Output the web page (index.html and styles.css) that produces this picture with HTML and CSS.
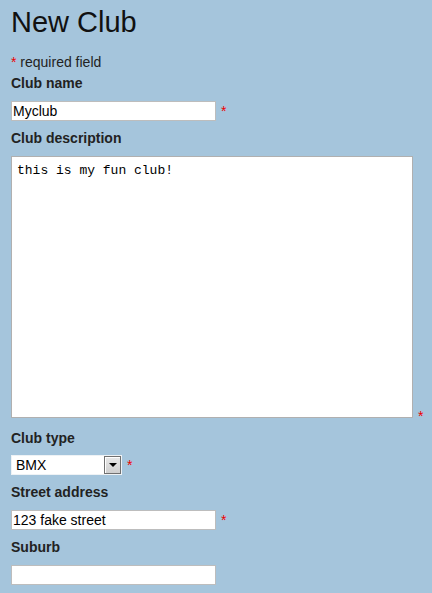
FILE: index.html
```html
<!DOCTYPE html>
<html>
<head>
<meta charset="utf-8">
<title>New Club</title>
<link rel="stylesheet" href="styles.css">
</head>
<body>
<h1 class="title">New Club</h1>
<p class="note"><span class="req">*</span> required field</p>
<form class="form">
  <div class="field">
    <label class="label" for="name">Club name</label>
    <div class="row"><input class="text" id="name" type="text" value="Myclub"><span class="req">*</span></div>
  </div>
  <div class="field field-area">
    <label class="label" for="desc">Club description</label>
    <div class="row row-area"><textarea class="area" id="desc">this is my fun club!</textarea><span class="req req-area">*</span></div>
  </div>
  <div class="field">
    <label class="label label-tight" for="type">Club type</label>
    <div class="row">
      <span class="select"><select class="select-box" id="type"><option>BMX</option></select><span class="select-btn"><svg width="8" height="4" viewBox="0 0 8 4"><path d="M0 0H8L4 4Z" fill="#000"/></svg></span></span><span class="req">*</span>
    </div>
  </div>
  <div class="field">
    <label class="label" for="street">Street address</label>
    <div class="row"><input class="text" id="street" type="text" value="123 fake street"><span class="req">*</span></div>
  </div>
  <div class="field">
    <label class="label" for="suburb">Suburb</label>
    <div class="row"><input class="text" id="suburb" type="text" value=""></div>
  </div>
</form>
</body>
</html>
```
FILE: styles.css
```css
html, body {
  margin: 0;
  padding: 0;
}
body {
  background: #a5c5dc;
  font-family: "Liberation Sans", Arial, sans-serif;
  color: #222;
  padding: 0 11px;
}
.title {
  margin: 0;
  padding-top: 6px;
  font-size: 29px;
  line-height: 32px;
  font-weight: normal;
  color: #111;
}
.note {
  margin: 16px 0 0;
  font-size: 14px;
  line-height: 16px;
}
.req {
  color: #e00;
  font-size: 14px;
  line-height: 16px;
}
.form {
  margin: 0;
  padding-top: 5px;
}
.field {
  margin-bottom: 9px;
}
.field-area {
  margin-bottom: 12px;
}
.label {
  display: block;
  font-size: 14px;
  line-height: 16px;
  font-weight: bold;
  margin-bottom: 10px;
}
.label-tight {
  margin-bottom: 9px;
}
.row {
  display: flex;
  align-items: baseline;
  gap: 5px;
}
.text {
  box-sizing: border-box;
  flex-shrink: 0;
  width: 205px;
  height: 20px;
  margin: 0;
  padding: 0 1px;
  border: 1px solid #bdbdbd;
  background: #fff;
  font-family: "Liberation Sans", Arial, sans-serif;
  font-size: 14px;
  color: #000;
  outline: none;
}
.row-area {
  align-items: flex-end;
}
.area {
  box-sizing: border-box;
  display: block;
  flex-shrink: 0;
  width: 402px;
  height: 262px;
  margin: 0;
  padding: 6px 5px;
  border: 1px solid #b0b0b0;
  background: #fff;
  font-family: "Liberation Mono", "Courier New", monospace;
  font-size: 13px;
  color: #000;
  resize: none;
  outline: none;
}
.req-area {
  margin-bottom: -6px;
}
.select {
  box-sizing: border-box;
  display: inline-flex;
  align-items: center;
  flex-shrink: 0;
  width: 111px;
  height: 20px;
  border: 1px solid #eef2f5;
  background: #fff;
}
.select-box {
  appearance: none;
  -webkit-appearance: none;
  flex: 1;
  min-width: 0;
  height: 18px;
  margin: 0;
  padding: 0 0 0 4px;
  border: 0;
  background: transparent;
  font-family: "Liberation Sans", Arial, sans-serif;
  font-size: 14px;
  color: #000;
  outline: none;
}
.select-btn {
  box-sizing: border-box;
  display: flex;
  align-items: center;
  justify-content: center;
  width: 17px;
  height: 18px;
  border: 1px solid #707070;
  box-shadow: inset 1px 1px 0 #fff;
  background: linear-gradient(#e8e8e8, #cfcfcf);
}
```
